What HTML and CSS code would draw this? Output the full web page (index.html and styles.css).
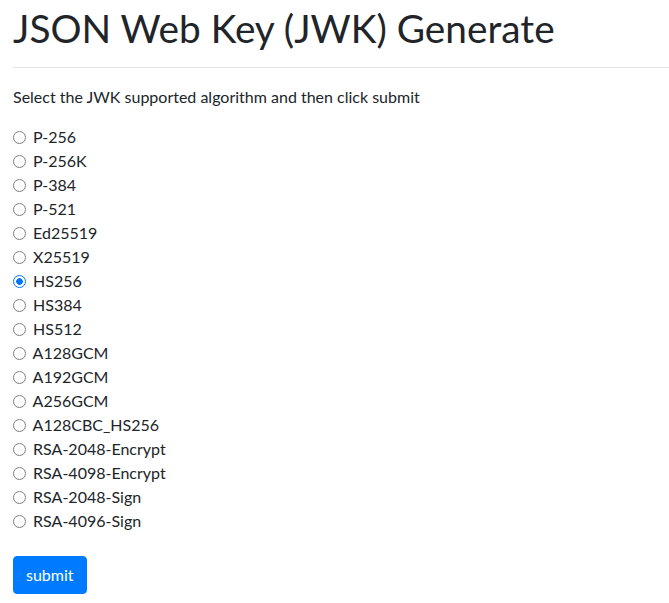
FILE: index.html
```html
<!DOCTYPE html>
<html lang="en">
<head>
<meta charset="utf-8">
<title>JSON Web Key (JWK) Generate</title>
<link rel="stylesheet" href="styles.css">
</head>
<body>
<div class="page">
  <h1 class="title">JSON Web Key (JWK) Generate</h1>
  <hr class="rule">
  <p class="intro">Select the JWK supported algorithm and then click submit</p>
  <form class="form">
    <div class="options">
      <label class="opt"><input type="radio" name="alg" value="P-256"> P-256</label>
      <label class="opt"><input type="radio" name="alg" value="P-256K"> P-256K</label>
      <label class="opt"><input type="radio" name="alg" value="P-384"> P-384</label>
      <label class="opt"><input type="radio" name="alg" value="P-521"> P-521</label>
      <label class="opt"><input type="radio" name="alg" value="Ed25519"> Ed25519</label>
      <label class="opt"><input type="radio" name="alg" value="X25519"> X25519</label>
      <label class="opt"><input type="radio" name="alg" value="HS256" checked> HS256</label>
      <label class="opt"><input type="radio" name="alg" value="HS384"> HS384</label>
      <label class="opt"><input type="radio" name="alg" value="HS512"> HS512</label>
      <label class="opt"><input type="radio" name="alg" value="A128GCM"> A128GCM</label>
      <label class="opt"><input type="radio" name="alg" value="A192GCM"> A192GCM</label>
      <label class="opt"><input type="radio" name="alg" value="A256GCM"> A256GCM</label>
      <label class="opt"><input type="radio" name="alg" value="A128CBC_HS256"> A128CBC_HS256</label>
      <label class="opt"><input type="radio" name="alg" value="RSA-2048-Encrypt"> RSA-2048-Encrypt</label>
      <label class="opt"><input type="radio" name="alg" value="RSA-4098-Encrypt"> RSA-4098-Encrypt</label>
      <label class="opt"><input type="radio" name="alg" value="RSA-2048-Sign"> RSA-2048-Sign</label>
      <label class="opt"><input type="radio" name="alg" value="RSA-4096-Sign"> RSA-4096-Sign</label>
    </div>
    <button type="button" class="btn">submit</button>
  </form>
</div>
</body>
</html>
```
FILE: styles.css
```css
html, body {
  margin: 0;
  padding: 0;
  background: #fff;
}
.page {
  padding: 0 0 0 13px;
  font-family: Lato, "Noto Sans", sans-serif;
  font-size: 16px;
  line-height: 24px;
  color: #212529;
}
.title {
  margin: 0;
  padding-top: 5px;
  font-size: 38.8px;
  font-weight: 400;
  line-height: 46px;
  height: 51px;
  letter-spacing: 0;
}
.rule {
  margin: 11px 0 17px 0;
  border: 0;
  border-top: 1px solid rgba(0,0,0,.1);
  height: 0;
}
.intro {
  margin: 0 0 16px 0;
}
.form {
  margin: 0;
}
.options {
  display: flex;
  flex-direction: column;
  margin-bottom: 23px;
}
.opt {
  display: block;
  height: 24px;
}
.opt input {
  -webkit-appearance: none;
  appearance: none;
  box-sizing: border-box;
  margin: 0 3px 0 0;
  width: 13px;
  height: 13px;
  border: 1.8px solid #7d7d85;
  border-radius: 50%;
  background: #fff;
  vertical-align: -1px;
}
.opt input:checked {
  border-color: #0075ff;
  background: radial-gradient(circle, #0075ff 0 3px, #fff 3.6px);
}
.btn {
  display: inline-block;
  font-family: inherit;
  font-size: 16px;
  line-height: 24px;
  padding: 6px 12px;
  color: #fff;
  background: #007bff;
  border: 1px solid #007bff;
  border-radius: 4px;
  cursor: pointer;
}
```
